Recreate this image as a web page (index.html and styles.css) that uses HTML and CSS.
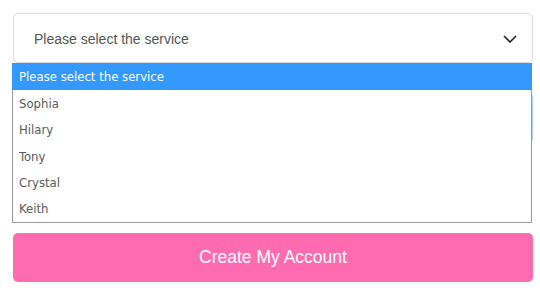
FILE: index.html
```html
<!DOCTYPE html>
<html>
<head>
<meta charset="utf-8">
<link rel="stylesheet" href="styles.css">
</head>
<body>
<div class="form">
  <div class="select-wrap">
    <div class="select">
      <span class="select-label">Please select the service</span>
      <svg class="chevron" width="14" height="8" viewBox="0 0 14 8"><path d="M1 1 L7 7 L13 1" fill="none" stroke="#222" stroke-width="1.6"/></svg>
    </div>
    <ul class="options">
      <li class="option selected">Please select the service</li>
      <li class="option">Sophia</li>
      <li class="option">Hilary</li>
      <li class="option">Tony</li>
      <li class="option">Crystal</li>
      <li class="option">Keith</li>
    </ul>
  </div>
  <div class="field"></div>
  <button class="submit">Create My Account</button>
</div>
</body>
</html>
```
FILE: styles.css
```css
* { box-sizing: border-box; }
html, body { margin: 0; padding: 0; background: #fff; }
.form {
  width: 546px;
  padding: 13px 7px 0 13px;
  display: flex;
  flex-direction: column;
}
.select-wrap { position: relative; width: 520px; }
.select {
  height: 50px;
  border: 1px solid #dcdcdc;
  border-radius: 5px;
  display: flex;
  align-items: center;
  justify-content: space-between;
  padding: 1px 15px 0 20px;
  font-family: "Liberation Sans", Arial, sans-serif;
  font-size: 14px;
  color: #555;
}
.chevron { display: block; margin-top: 0; }
.options {
  position: absolute;
  left: -1px;
  top: 50px;
  width: 520px;
  margin: 0;
  padding: 0 0 1px 0;
  list-style: none;
  background: #fff;
  border: 1px solid #9a9a9a;
  border-top: none;
  z-index: 2;
  font-family: "DejaVu Sans Condensed", "DejaVu Sans", sans-serif;
  font-size: 13px;
  color: #5a5a5a;
}
.option {
  height: 26.3px;
  line-height: 27px;
  padding-left: 6px;
}
.option.selected {
  background: #3399ff;
  color: #fff;
  height: 27px;
  margin: 0 -1px 0 -1px;
  padding-left: 7px;
}
.field {
  margin-top: 30px;
  height: 50px;
  width: 520px;
  border: 1px solid #a8d4f7;
  border-radius: 4px;
}
.submit {
  margin-top: 90px;
  width: 520px;
  height: 49px;
  border: none;
  border-radius: 5px;
  background: #fe6bb0;
  color: #fff;
  font-family: "Liberation Sans", Arial, sans-serif;
  font-size: 17.5px;
  padding: 0;
}
```
